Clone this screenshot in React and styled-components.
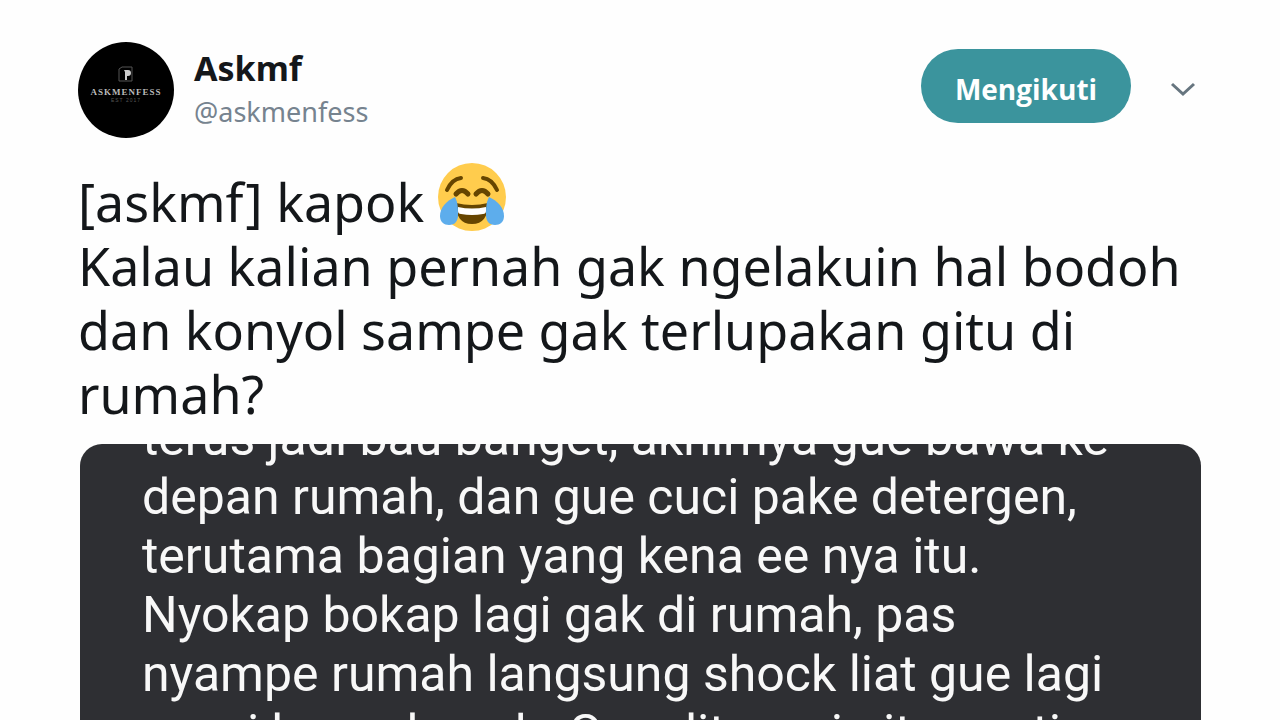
import React from "react";
import styled, { createGlobalStyle } from "styled-components";

const GlobalStyle = createGlobalStyle`
  *, *::before, *::after { box-sizing: border-box; }
  body {
    margin: 0;
    background: #fefefe;
    color: #14171a;
    font-family: "Noto Sans", "Open Sans", sans-serif;
  }
`;

const Page = styled.main`
  height: 100vh;
  overflow: hidden;
`;

const Tweet = styled.article`
  padding: 40px 79px 0 78px;
`;

const Header = styled.header`
  display: flex;
  align-items: flex-start;
  gap: 20px;
  padding-right: 2px;
`;

const Avatar = styled.svg`
  width: 96px;
  height: 96px;
  margin-top: 2px;
  flex: none;
`;

const Account = styled.a`
  flex: 1;
  min-width: 0;
  padding-top: 6px;
  color: inherit;
  text-decoration: none;
`;

const DisplayName = styled.strong`
  display: block;
  font-size: 34px;
  line-height: 44px;
  font-weight: 700;
  color: #14171a;
`;

const Handle = styled.span`
  display: block;
  font-size: 27px;
  line-height: 44px;
  color: #76838f;
`;

const Actions = styled.div`
  display: flex;
  align-items: center;
  gap: 36px;
  padding-top: 9px;
`;

const FollowButton = styled.button`
  height: 74px;
  width: 210px;
  padding: 6px 0 0;
  border: 0;
  border-radius: 37px;
  background: #3b949d;
  color: #ffffff;
  font-family: "Open Sans", sans-serif;
  font-size: 28px;
  line-height: 36px;
  font-weight: 700;
  cursor: pointer;
`;

const MenuButton = styled.button`
  display: flex;
  padding: 6px 0 0;
  border: 0;
  background: none;
  color: #66757f;
  cursor: pointer;
`;

const Message = styled.p`
  margin: 32px 0 0;
  font-size: 52px;
  line-height: 64px;
`;

const Emoji = styled.svg`
  width: 70px;
  height: 70px;
  margin-top: -12px;
  vertical-align: -10px;
`;

const Attachment = styled.figure`
  margin: 18px 0 0 2px;
  height: 400px;
  overflow: hidden;
  border-radius: 22px;
  background: #2e2f33;
`;

const Story = styled.p`
  margin: -35px 0 0;
  padding-left: 62px;
  color: #f8f8f8;
  font-family: Roboto, sans-serif;
  font-size: 50px;
  line-height: 59px;
  white-space: nowrap;
`;

const storyLines = [
  "terus jadi bau banget, akhirnya gue bawa ke",
  "depan rumah, dan gue cuci pake detergen,",
  "terutama bagian yang kena ee nya itu.",
  "Nyokap bokap lagi gak di rumah, pas",
  "nyampe rumah langsung shock liat gue lagi",
  "nyuci kasur basah. Gue ditanyain itu pasti",
];

function AvatarLogo() {
  return (
    <Avatar viewBox="0 0 96 96" role="img" aria-label="Askmenfess">
      <circle cx="48" cy="48" r="48" fill="#000" />
      <path d="M41 39V27l3-2h10v14z" fill="none" stroke="#555" strokeWidth="1" />
      <path d="M46 28h4q3 0 3 3t-3 3h-1v4h-2v-8z" fill="#ccc" />
      <text x="48" y="53" textAnchor="middle" fill="#bbb" fontFamily="Liberation Serif, serif" fontWeight="700" fontSize="9" letterSpacing="1">ASKMENFESS</text>
      <text x="48" y="60" textAnchor="middle" fill="#555" fontFamily="Liberation Sans, sans-serif" fontSize="5" letterSpacing="1">EST 2017</text>
    </Avatar>
  );
}

function JoyEmoji() {
  return (
    <Emoji viewBox="0 0 70 70" role="img" aria-label="Face with tears of joy">
      <circle cx="34" cy="35" r="34" fill="#ffcc4d" />
      <g fill="none" stroke="#664500" strokeLinecap="round">
        <path d="M9 28q5-11 14-12" strokeWidth="4" />
        <path d="M59 28q-5-11-14-12" strokeWidth="4" />
        <path d="M18 32q6-7 12 0" strokeWidth="5" />
        <path d="M38 32q6-7 12 0" strokeWidth="5" />
      </g>
      <path d="M18 41q16 4 32 0c0 14-5 21-16 21S18 55 18 41z" fill="#664500" />
      <path d="M20 45q14 3 28 0v4q0 3-3 3-11 2-22 0-3 0-3-3z" fill="#fff" />
      <path d="M17 35C8 39 2 46 2 54c0 6 4 9 9 9 6 0 9-4 9-10 0-7 0-12-3-18z" fill="#5dadec" />
      <path d="M51 35c9 4 15 11 15 19 0 6-4 9-9 9-6 0-9-4-9-10 0-7 0-12 3-18z" fill="#5dadec" />
    </Emoji>
  );
}

export default function App() {
  return (
    <>
      <GlobalStyle />
      <Page>
        <Tweet>
          <Header>
            <AvatarLogo />
            <Account href="#askmenfess">
              <DisplayName>Askmf</DisplayName>
              <Handle>@askmenfess</Handle>
            </Account>
            <Actions>
              <FollowButton type="button">Mengikuti</FollowButton>
              <MenuButton type="button" aria-label="Menu">
                <svg width="32" height="20" viewBox="0 0 32 20" fill="none" stroke="currentColor" strokeWidth="3">
                  <path d="M5 5l11 10L27 5" />
                </svg>
              </MenuButton>
            </Actions>
          </Header>
          <Message>
            [askmf] kapok <JoyEmoji />
            <br />
            Kalau kalian pernah gak ngelakuin hal bodoh
            <br />
            dan konyol sampe gak terlupakan gitu di
            <br />
            rumah?
          </Message>
          <Attachment>
            <Story>
              {storyLines.map((line) => (
                <React.Fragment key={line}>
                  {line}
                  <br />
                </React.Fragment>
              ))}
            </Story>
          </Attachment>
        </Tweet>
      </Page>
    </>
  );
}
